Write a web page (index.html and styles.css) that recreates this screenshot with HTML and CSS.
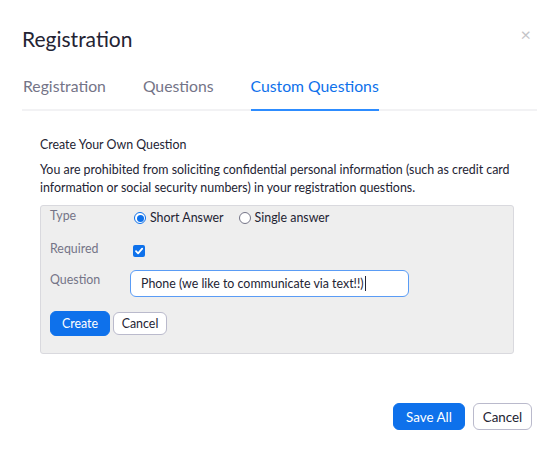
FILE: index.html
```html
<!DOCTYPE html>
<html>
<head>
<meta charset="utf-8">
<link rel="stylesheet" href="styles.css">
</head>
<body>
<div class="dialog">
  <div class="header">
    <h1 class="title">Registration</h1>
    <span class="close">&#215;</span>
  </div>
  <div class="tabs">
    <div class="tab">Registration</div>
    <div class="tab">Questions</div>
    <div class="tab active">Custom Questions</div>
  </div>
  <div class="content">
    <div class="subtitle">Create Your Own Question</div>
    <p class="notice">You are prohibited from soliciting confidential personal information (such as credit card information or social security numbers) in your registration questions.</p>
    <div class="panel">
      <div class="row row-type">
        <div class="label">Type</div>
        <div class="field radios">
          <label class="radio"><span class="dot checked"></span>Short Answer</label>
          <label class="radio"><span class="dot"></span>Single answer</label>
        </div>
      </div>
      <div class="row row-req">
        <div class="label">Required</div>
        <div class="field">
          <span class="check"><svg width="12" height="12" viewBox="0 0 12 12"><path d="M3 6.2 L5.1 8.3 L9.2 3.6" fill="none" stroke="#fff" stroke-width="1.8" stroke-linecap="round" stroke-linejoin="round"/></svg></span>
        </div>
      </div>
      <div class="row row-q">
        <div class="label">Question</div>
        <div class="field">
          <div class="input">Phone (we like to communicate via text!!)<span class="caret"></span></div>
        </div>
      </div>
      <div class="actions">
        <button class="btn primary small">Create</button>
        <button class="btn secondary small">Cancel</button>
      </div>
    </div>
  </div>
  <div class="footer">
    <button class="btn primary big save">Save All</button>
    <button class="btn secondary big">Cancel</button>
  </div>
</div>
</body>
</html>
```
FILE: styles.css
```css
* { box-sizing: border-box; }
html, body { margin: 0; padding: 0; background: #fff; }
body {
  font-family: Lato, "Open Sans", "Liberation Sans", sans-serif;
  color: #232333;
  width: 552px;
  height: 450px;
  overflow: hidden;
}
.dialog { padding: 0 16px 0 22px; }
.header {
  display: flex;
  justify-content: space-between;
  align-items: flex-start;
  height: 76px;
  padding-top: 25px;
}
.title {
  margin: 0;
  font-size: 21px;
  font-weight: 400;
  line-height: 28px;
  color: #232333;
}
.close {
  font-size: 18px;
  color: #c4c4c8;
  line-height: 18px;
  margin-top: 0;
  margin-right: 5px;
}
.tabs {
  display: flex;
  gap: 37px;
  border-bottom: 2px solid #f2f2f4;
  margin-right: -1px;
  padding-left: 1px;
}
.tab {
  font-size: 15.75px;
  line-height: 20px;
  color: #747487;
  padding-bottom: 13px;
  margin-bottom: -2px;
  border-bottom: 2px solid transparent;
}
.tab.active {
  color: #0e71eb;
  border-bottom-color: #2d8cff;
}
.content { padding: 24px 14px 0 18px; }
.subtitle {
  font-size: 12.4px;
  line-height: 20px;
  color: #232333;
}
.notice {
  margin: 6px 0 0;
  font-size: 12.4px;
  line-height: 18px;
  color: #232333;
}
.panel {
  margin-top: 8px;
  width: 474px;
  height: 149px;
  background: #eeeeee;
  border: 1px solid #d9d9de;
  border-radius: 3px;
  padding: 0 9px 0;
}
.row { display: flex; align-items: flex-start; }
.label {
  width: 80px;
  font-size: 12.4px;
  line-height: 20px;
  color: #747487;
}
.row-type { height: 33px; }
.row-type .field { padding-top: 2px; }
.row-req { height: 31px; }
.row-q { height: 41px; }
.radios { display: flex; gap: 11px; font-size: 12.4px; color: #232333; line-height: 20px; }
.radio { display: flex; align-items: center; }
.dot {
  width: 12px; height: 12px;
  border: 1px solid #747487;
  border-radius: 50%;
  background: #fff;
  margin: 0 4px 0 4px;
  position: relative;
}
.dot.checked { border-color: #0e71eb; }
.dot.checked::after {
  content: "";
  position: absolute;
  left: 1.5px; top: 1.5px;
  width: 7px; height: 7px;
  border-radius: 50%;
  background: #0e71eb;
}
.check {
  display: inline-flex;
  width: 12px; height: 12px;
  margin: 6px 0 0 3px;
  border-radius: 2px;
  background: #0e71eb;
}
.input {
  width: 279px;
  height: 27px;
  border: 1px solid #5a9cf5;
  border-radius: 6px;
  background: #fff;
  font-size: 12.4px;
  line-height: 25px;
  padding-left: 10px;
  color: #232333;
  display: flex;
  align-items: center;
}
.caret {
  display: inline-block;
  width: 1px;
  height: 15px;
  background: #232333;
  margin-left: 1px;
}
.actions { display: flex; gap: 3px; align-items: center; }
.btn {
  font-family: inherit;
  border-radius: 6px;
  font-size: 12.4px;
  cursor: pointer;
}
.btn.primary {
  background: #0e71eb;
  color: #fff;
  border: 1px solid #0e71eb;
}
.btn.secondary {
  background: #fff;
  color: #232333;
  border: 1px solid #babacc;
}
.btn.small { height: 25px; padding: 0; }
.btn.small.secondary { height: 23px; }
.btn.primary.small { width: 60px; }
.btn.secondary.small { width: 54px; }
.footer {
  display: flex;
  justify-content: flex-end;
  gap: 8px;
  margin-top: 49px;
  padding-right: 4px;
}
.btn.big { height: 27px; font-size: 13.4px; padding: 0; }
.btn.big.save { width: 72px; }
.btn.big.secondary { width: 59px; }
```
